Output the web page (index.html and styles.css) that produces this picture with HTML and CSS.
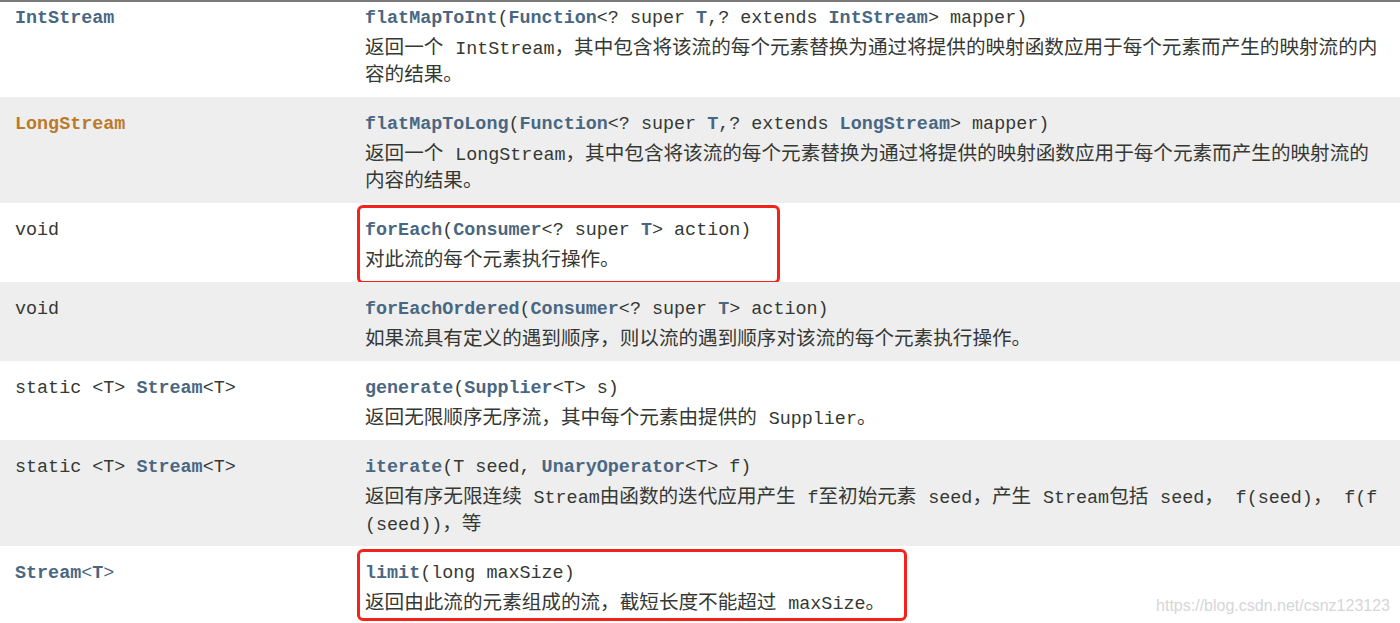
FILE: index.html
```html
<!DOCTYPE html>
<html lang="zh-CN">
<head>
    <meta charset="UTF-8">
    <meta name="viewport" content="width=device-width, initial-scale=1.0">
    <title>Stream 方法摘要</title>
    <link rel="stylesheet" href="styles.css">
</head>
<body>
    <table class="summary">
        <tr class="row first">
            <td class="type"><b class="link">IntStream</b></td>
            <td class="method">
                <div class="sig"><b class="link">flatMapToInt</b>(<b class="link">Function</b>&lt;? super <b class="link">T</b>,? extends <b class="link">IntStream</b>&gt; mapper)</div>
                <div class="desc">返回一个 <code>IntStream</code>，其中包含将该流的每个元素替换为通过将提供的映射函数应用于每个元素而产生的映射流的内<br>容的结果。</div>
            </td>
        </tr>
        <tr class="row alt">
            <td class="type"><b class="link visited">LongStream</b></td>
            <td class="method">
                <div class="sig"><b class="link">flatMapToLong</b>(<b class="link">Function</b>&lt;? super <b class="link">T</b>,? extends <b class="link">LongStream</b>&gt; mapper)</div>
                <div class="desc">返回一个 <code>LongStream</code>，其中包含将该流的每个元素替换为通过将提供的映射函数应用于每个元素而产生的映射流的<br>内容的结果。</div>
            </td>
        </tr>
        <tr class="row">
            <td class="type">void</td>
            <td class="method">
                <div class="mark mark-a">
                    <div class="sig"><b class="link">forEach</b>(<b class="link">Consumer</b>&lt;? super <b class="link">T</b>&gt; action)</div>
                    <div class="desc">对此流的每个元素执行操作。</div>
                </div>
            </td>
        </tr>
        <tr class="row alt">
            <td class="type">void</td>
            <td class="method">
                <div class="sig"><b class="link">forEachOrdered</b>(<b class="link">Consumer</b>&lt;? super <b class="link">T</b>&gt; action)</div>
                <div class="desc">如果流具有定义的遇到顺序，则以流的遇到顺序对该流的每个元素执行操作。</div>
            </td>
        </tr>
        <tr class="row">
            <td class="type">static &lt;T&gt; <b class="link">Stream</b>&lt;T&gt;</td>
            <td class="method">
                <div class="sig"><b class="link">generate</b>(<b class="link">Supplier</b>&lt;T&gt; s)</div>
                <div class="desc">返回无限顺序无序流，其中每个元素由提供的 <code>Supplier</code>。</div>
            </td>
        </tr>
        <tr class="row alt">
            <td class="type">static &lt;T&gt; <b class="link">Stream</b>&lt;T&gt;</td>
            <td class="method">
                <div class="sig"><b class="link">iterate</b>(T seed, <b class="link">UnaryOperator</b>&lt;T&gt; f)</div>
                <div class="desc">返回有序无限连续 <code>Stream</code>由函数的迭代应用产生 <code>f</code>至初始元素 <code>seed</code>，产生 <code>Stream</code>包括 <code>seed</code>， <code>f(seed)</code>， <code>f(f</code><br><code>(seed))</code>，等</div>
            </td>
        </tr>
        <tr class="row">
            <td class="type"><span class="tone"><b>Stream</b>&lt;<b>T</b>&gt;</span></td>
            <td class="method">
                <div class="mark mark-b">
                    <div class="sig"><b class="link">limit</b>(long maxSize)</div>
                    <div class="desc">返回由此流的元素组成的流，截短长度不能超过 <code>maxSize</code>。</div>
                </div>
            </td>
        </tr>
    </table>
    <div class="watermark">https://blog.csdn.net/csnz123123</div>
</body>
</html>
```

FILE: styles.css
```css
body {
    margin: 0;
    background: #ffffff;
    color: #353833;
    font-family: "Liberation Mono", "Noto Sans CJK SC", monospace;
    font-size: 18.4px;
    position: relative;
    height: 623px;
    overflow: hidden;
}
.summary {
    width: 100%;
    border-collapse: collapse;
    table-layout: fixed;
    border-top: 2px solid #7b7b7b;
}
.row td {
    vertical-align: top;
    padding: 15px 0 7px 15px;
}
.row.first td {
    padding-top: 4px;
}
.row.alt {
    background: #eeeeef;
}
.type {
    width: 335px;
    line-height: 26px;
    white-space: nowrap;
}
.sig {
    line-height: 26px;
    margin-bottom: 4px;
    white-space: nowrap;
}
.desc {
    font-size: 19.6px;
    line-height: 27px;
    white-space: nowrap;
}
.desc code {
    font-family: "Liberation Mono", monospace;
    font-size: 18.4px;
    line-height: 1;
}
.link {
    color: #4a6782;
    font-weight: bold;
}
.link.visited {
    color: #bb7a2a;
}
.tone {
    color: #4a6782;
}
.mark {
    width: fit-content;
    border: 3px solid #f5221b;
    border-radius: 6px;
    margin-left: -8px;
}
.mark-a {
    margin-top: -13px;
    margin-bottom: -9px;
    padding: 10px 26px 6px 5px;
}
.mark-b {
    margin-top: -12px;
    margin-bottom: -3px;
    padding: 9px 19px 0 5px;
}
.watermark {
    position: absolute;
    right: 10px;
    bottom: 8px;
    font-family: "Liberation Sans", Arial, sans-serif;
    font-size: 16px;
    color: #d6d6d6;
}
```
